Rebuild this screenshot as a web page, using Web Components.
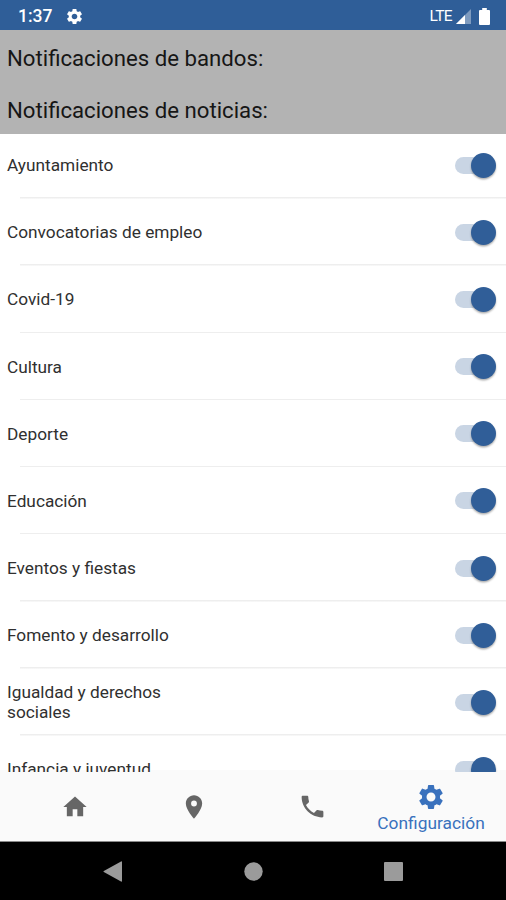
<!DOCTYPE html>
<html lang="es">
<head>
<meta charset="utf-8">
<title>Configuración</title>
<style>
html,body{margin:0;height:100%}
body{font-family:Roboto,"Liberation Sans",sans-serif;background:#fff;overflow:hidden}
</style>
</head>
<body>
<settings-app></settings-app>
<script>
const define = (name, html) => {
  const t = document.createElement('template');
  t.innerHTML = html;
  customElements.define(name, class extends HTMLElement {
    constructor() {
      super();
      this.attachShadow({ mode: 'open' }).append(t.content.cloneNode(true));
    }
  });
};

const GEAR = 'M19.14 12.94c.04-.3.06-.61.06-.94 0-.32-.02-.64-.07-.94l2.03-1.58c.18-.14.23-.41.12-.61l-1.92-3.32c-.12-.22-.37-.29-.59-.22l-2.39.96c-.5-.38-1.03-.7-1.62-.94l-.36-2.54c-.04-.24-.24-.41-.48-.41h-3.84c-.24 0-.43.17-.47.41l-.36 2.54c-.59.24-1.13.57-1.62.94l-2.39-.96c-.22-.08-.47 0-.59.22L2.74 8.87c-.12.21-.08.47.12.61l2.03 1.58c-.05.3-.09.63-.09.94s.02.64.07.94l-2.03 1.58c-.18.14-.23.41-.12.61l1.92 3.32c.12.22.37.29.59.22l2.39-.96c.5.38 1.03.7 1.62.94l.36 2.54c.05.24.24.41.48.41h3.84c.24 0 .44-.17.47-.41l.36-2.54c.59-.24 1.13-.56 1.62-.94l2.39.96c.22.08.47 0 .59-.22l1.92-3.32c.12-.22.07-.47-.12-.61l-2.01-1.58zM12 15.6c-1.98 0-3.6-1.62-3.6-3.6s1.62-3.6 3.6-3.6 3.6 1.62 3.6 3.6-1.62 3.6-3.6 3.6z';

define('status-bar', `
<style>
:host{display:flex;align-items:center;height:30px;box-sizing:border-box;padding:2px 16px 0 18px;background:#2f5e98;color:#fff}
.time{font-size:17.5px;font-weight:500;width:47px}
.lte{font-size:15.5px;letter-spacing:-.6px;margin-left:auto;margin-right:4px}
svg{display:block;fill:#fff}
.battery{margin-left:8px}
</style>
<span class="time">1:37</span>
<svg width="19" height="19" viewBox="0 0 24 24"><path d="${GEAR}"/></svg>
<span class="lte">LTE</span>
<svg width="15" height="15" viewBox="0 0 15 15"><path d="M0 15 15 0v15z" opacity=".38"/><path d="M0 15 9 6v9z"/></svg>
<svg class="battery" width="11" height="17" viewBox="0 0 11 17"><path d="M3.2 0h4.6v2H10q1 0 1 1v13q0 1-1 1H1q-1 0-1-1V3q0-1 1-1h2.2z"/></svg>
`);

define('section-header', `
<style>
:host{display:flex;align-items:center;height:52px;padding:4px 7px 0;box-sizing:border-box;background:#b3b3b3;color:#161616;font-size:22.2px;white-space:nowrap}
</style><slot></slot>
`);

define('toggle-switch', `
<style>
:host{display:flex;align-items:center;width:41px;height:26px}
.track{flex:1;height:17px;border-radius:9px 0 0 9px;background:#c9d5e4;margin-right:-12px}
.thumb{width:25px;height:25px;border-radius:50%;background:#305e98;box-shadow:0 1.5px 2px rgba(0,0,0,.32)}
</style><div class="track"></div><div class="thumb"></div>
`);

define('setting-row', `
<style>
:host{display:grid;grid-template-columns:204px 1fr;align-items:center;flex:none;height:67.15px;box-sizing:border-box;padding:0 9.6px 0 7px;color:#303030;font-size:17.25px;line-height:20px;background:linear-gradient(#eee,#eee) 20px 100%/100% 1.5px no-repeat}
toggle-switch{justify-self:end}
</style><span class="label"><slot></slot></span><toggle-switch></toggle-switch>
`);

define('setting-list', `
<style>
:host{display:flex;flex-direction:column;overflow:hidden;background:linear-gradient(#fafafa,#fafafa) 0 100%/100% 2px no-repeat #fff}
::slotted(setting-row:first-child){margin-top:-2.4px}
</style><slot></slot>
`);

define('tab-item', `
<style>
:host{display:flex;flex-direction:column;align-items:center;justify-content:center;color:#666;font-size:17.35px;line-height:21px}
:host([active]){color:#3971bd;padding-top:2px;gap:1px}
::slotted(svg){display:block;fill:currentColor}
</style><slot name="icon"></slot><span><slot></slot></span>
`);

define('tab-bar', `
<style>
:host{display:grid;grid-template-columns:repeat(4,118.7px);justify-content:center;height:70px;background:#fafafa;border-bottom:1px solid #8a8a8a;box-sizing:border-box}
tab-item:not([active])::part(label){display:none}
</style>
<tab-item><svg slot="icon" width="28" height="28" viewBox="0 0 24 24"><path d="M10 20v-6h4v6h5v-8h3L12 3 2 12h3v8z"/></svg></tab-item>
<tab-item><svg slot="icon" width="28" height="28" viewBox="0 0 24 24"><path d="M12 2C8.13 2 5 5.13 5 9c0 5.25 7 13 7 13s7-7.75 7-13c0-3.87-3.13-7-7-7zm0 9.5a2.5 2.5 0 1 1 0-5 2.5 2.5 0 0 1 0 5z"/></svg></tab-item>
<tab-item><svg slot="icon" width="29" height="29" viewBox="0 0 24 24"><path d="M6.62 10.79c1.44 2.83 3.76 5.14 6.59 6.59l2.2-2.2c.27-.27.67-.36 1.02-.24 1.12.37 2.33.57 3.57.57.55 0 1 .45 1 1V20c0 .55-.45 1-1 1-9.39 0-17-7.61-17-17 0-.55.45-1 1-1h3.5c.55 0 1 .45 1 1 0 1.25.2 2.45.57 3.57.11.35.03.74-.25 1.02l-2.2 2.2z"/></svg></tab-item>
<tab-item active><svg slot="icon" width="30" height="30" viewBox="0 0 24 24"><path d="${GEAR}"/></svg>Configuración</tab-item>
`);

define('nav-bar', `
<style>
:host{display:grid;grid-template-columns:repeat(3,140.5px);justify-content:center;align-items:center;justify-items:center;height:58px;background:#000}
svg{display:block;fill:#9b9b9b}
</style>
<svg width="19" height="21" viewBox="0 0 19 21"><path d="M18 .5q1-.5 1 .5v19q0 1-1 .5L.8 11q-.8-.5 0-1z"/></svg>
<svg width="19" height="19" viewBox="0 0 19 19"><circle cx="9.5" cy="9.5" r="9.2"/></svg>
<svg width="19" height="19" viewBox="0 0 19 19"><rect width="19" height="19" rx="1"/></svg>
`);

define('settings-app', `
<style>
:host{display:grid;grid-template-rows:30px 52px 52px 1fr 70px 58px;width:506px;height:900px}
setting-list{min-height:0}
</style>
<status-bar></status-bar>
<section-header>Notificaciones de bandos:</section-header>
<section-header>Notificaciones de noticias:</section-header>
<setting-list>
<setting-row>Ayuntamiento</setting-row>
<setting-row>Convocatorias de empleo</setting-row>
<setting-row>Covid-19</setting-row>
<setting-row>Cultura</setting-row>
<setting-row>Deporte</setting-row>
<setting-row>Educación</setting-row>
<setting-row>Eventos y fiestas</setting-row>
<setting-row>Fomento y desarrollo</setting-row>
<setting-row>Igualdad y derechos sociales</setting-row>
<setting-row>Infancia y juventud</setting-row>
</setting-list>
<tab-bar></tab-bar>
<nav-bar></nav-bar>
`);
</script>
</body>
</html>
